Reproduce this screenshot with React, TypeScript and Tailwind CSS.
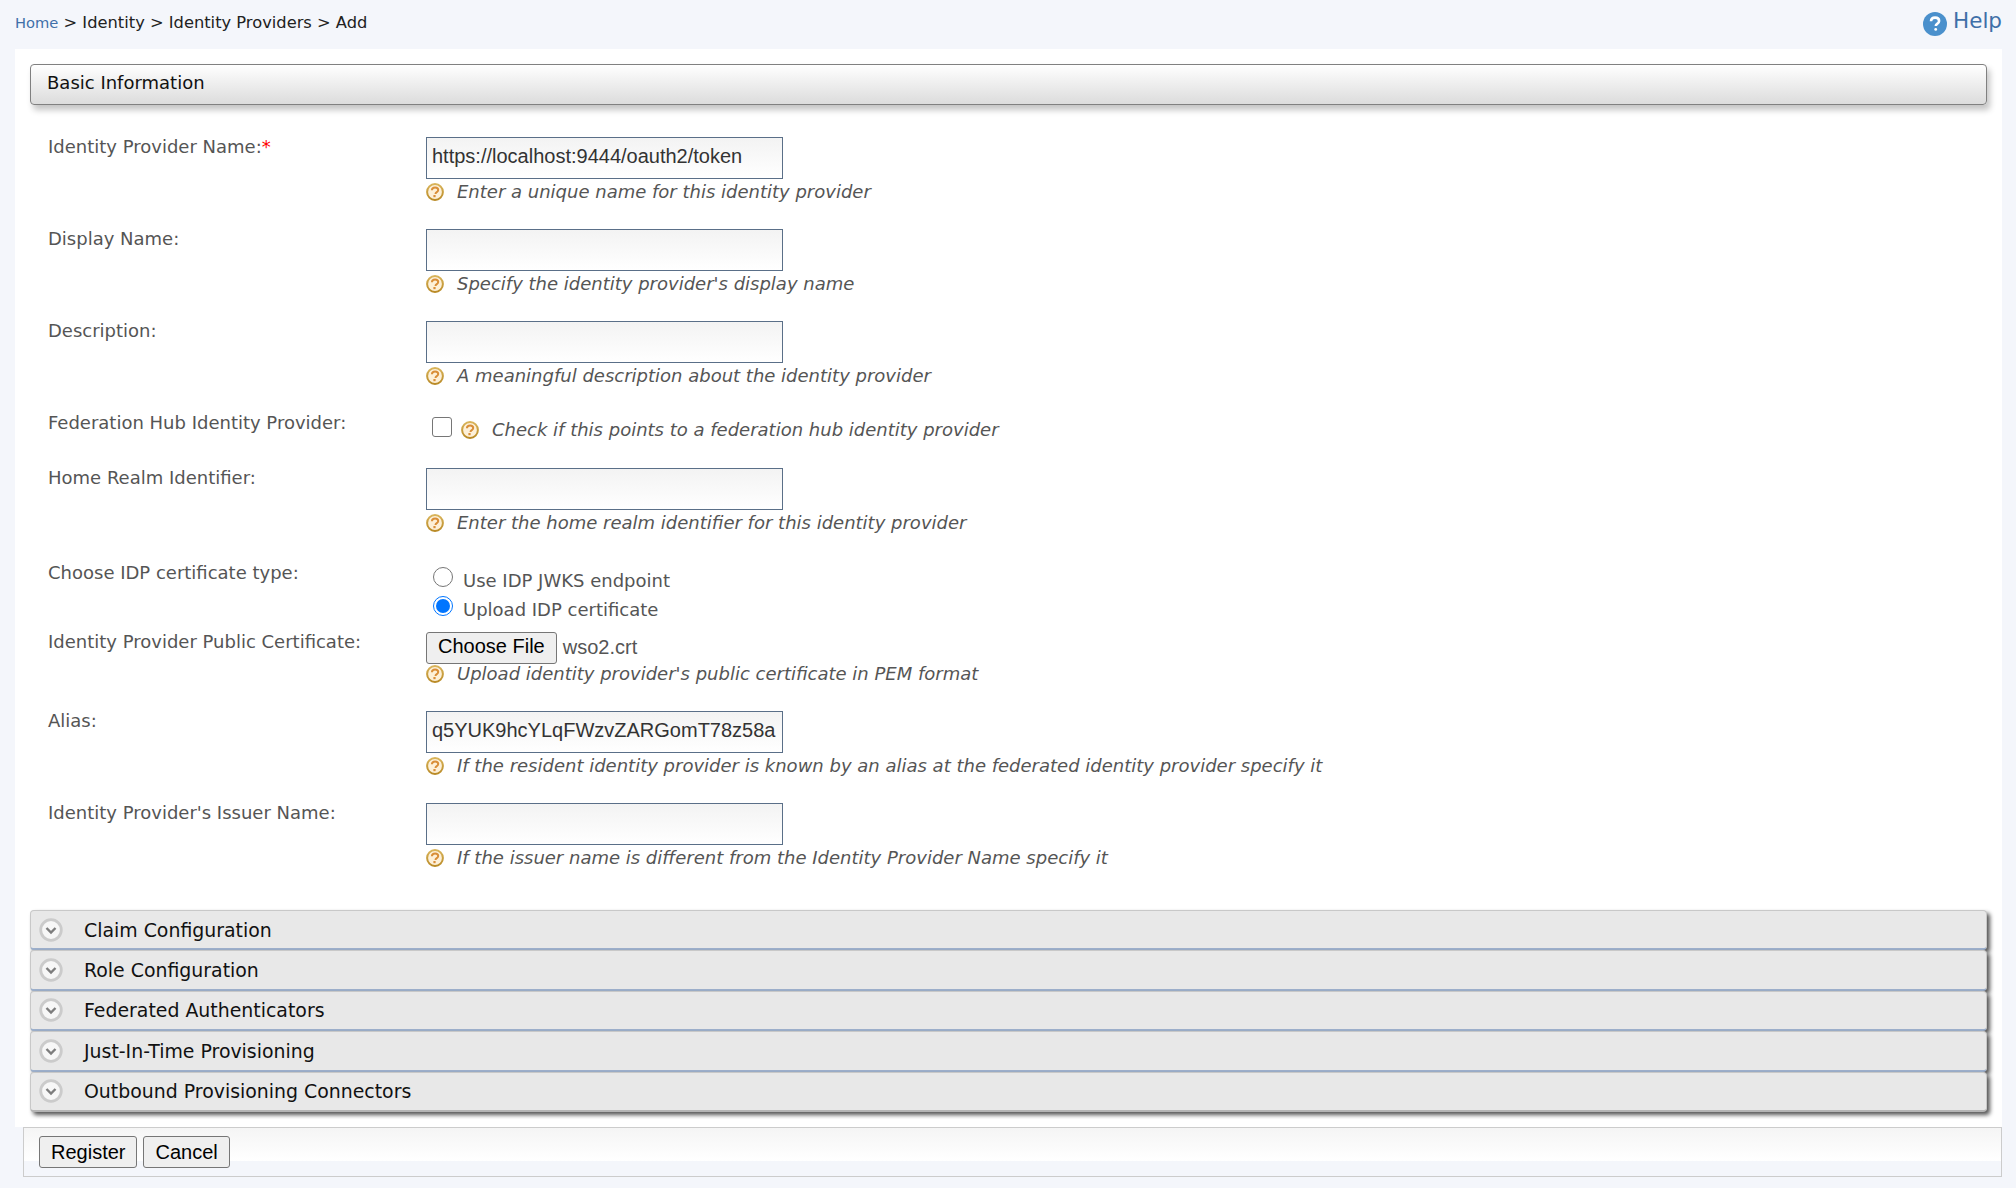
import React from "react";

const sans = "font-['DejaVu_Sans',sans-serif]";

function HintIcon() {
  return (
    <svg width="18" height="18" viewBox="0 0 18 18" className="shrink-0">
      <defs>
        <linearGradient id="ring" x1="0" y1="0" x2="0" y2="1">
          <stop offset="0%" stopColor="#d9b45a" />
          <stop offset="100%" stopColor="#b98a26" />
        </linearGradient>
      </defs>
      <circle cx="9" cy="9" r="7.900" fill="#fdf0d8" stroke="url(#ring)" strokeWidth="2" />
      <path d="M5.900 7.200c.1-1.900 1.400-2.800 3.200-2.800 1.900 0 3.100 1 3.100 2.500 0 1.200-.7 1.700-1.500 2.300-.8.500-1.200.9-1.200 1.800" fill="none" stroke="#d98e38" strokeWidth="2" />
      <rect x="7.400" y="12" width="2.200" height="2.200" fill="#d98e38" />
    </svg>
  );
}

function Hint({ text }: { text: string }) {
  return (
    <div className="flex items-center h-[22px]">
      <HintIcon />
      <span className="ml-[13px] italic text-[18px] leading-[22px] text-[#555555] whitespace-nowrap">{text}</span>
    </div>
  );
}

function Label({ children }: { children: React.ReactNode }) {
  return <div className="w-[396px] shrink-0 pl-[18px] text-[18px] leading-[20px] text-[#555555] whitespace-nowrap">{children}</div>;
}

function TextBox({ value }: { value?: string }) {
  return (
    <input
      readOnly
      value={value ?? ""}
      className="block w-[357px] h-[42px] px-[5px] pb-[4px] border border-[#5a6f88] bg-gradient-to-b from-[#f3f3f3] to-white font-['Liberation_Sans',sans-serif] text-[20px] text-[#333333] outline-none"
    />
  );
}

function InputRow({ label, value, hint, h = "h-[92px]" }: { label: React.ReactNode; value?: string; hint: string; h?: string }) {
  return (
    <div className={`flex ${h}`}>
      <Label>{label}</Label>
      <div>
        <TextBox value={value} />
        <div className="mt-[2px]"><Hint text={hint} /></div>
      </div>
    </div>
  );
}

function Chevron() {
  return (
    <svg width="24" height="24" viewBox="0 0 24 24" className="shrink-0">
      <circle cx="12" cy="12" r="10.300" fill="#f7f7f7" stroke="#cbcbcb" strokeWidth="2.800" />
      <path d="M7.500 10l4.500 4.600L16.500 10" fill="none" stroke="#7d7d7d" strokeWidth="2.400" />
    </svg>
  );
}

function Section({ title, last }: { title: string; last?: boolean }) {
  return (
    <div
      className={`flex items-center h-[40.4px] rounded-[4px] border border-[#c8c8c8] bg-[#e8e8e8] pl-[8px] shadow-[3px_3px_4px_#555555] border-b-2 ${last ? "border-b-[#b4b4b4]" : "border-b-[#9db0cc]"}`}
    >
      <Chevron />
      <span className="ml-[21px] text-[18.900px] leading-[24px] text-[#111111] whitespace-nowrap">{title}</span>
    </div>
  );
}

function Btn({ children }: { children: React.ReactNode }) {
  return (
    <button className="h-[32px] rounded-[3px] border border-[#767676] bg-[#efefef] px-[11px] font-['Liberation_Sans',sans-serif] text-[20px] leading-[24px] text-black">
      {children}
    </button>
  );
}

export default function App() {
  return (
    <div className={`${sans} w-[2016px] h-[1188px] overflow-hidden bg-[#f4f6fb]`}>
      <div className="flex justify-between h-[49px]">
        <div className="pl-[15px] pt-[13px] text-[16.300px] leading-[20px] text-[#222222] whitespace-nowrap">
          <span className="text-[14.700px] text-[#3f6fa8]">Home</span>
          <span> &gt; Identity &gt; Identity Providers &gt; Add</span>
        </div>
        <div className="flex items-start pr-[14px] pt-[9px]">
          <svg width="24" height="24" viewBox="0 0 24 24" className="mt-[3px]">
            <circle cx="12" cy="12" r="12" fill="#4a90cc" />
            <path d="M8 9.300c.1-2.400 1.800-3.700 4.100-3.700 2.400 0 4 1.300 4 3.300 0 1.500-.9 2.200-2 3-.9.600-1.300 1-1.300 2.100" fill="none" stroke="#ffffff" strokeWidth="2.600" />
            <rect x="11.300" y="16" width="2.800" height="2.800" rx="1.400" fill="#ffffff" />
          </svg>
          <span className="ml-[6px] -mt-[1px] text-[21.500px] leading-[26px] text-[#3f6fa8]">Help</span>
        </div>
      </div>

      <div className="ml-[15px] w-[1987px] h-[1078px] bg-white pt-[15px] px-[15px]">
        <div className="h-[41px] w-[1957px] flex items-center pb-[4px] pl-[16px] rounded-[4px] border border-[#808080] bg-gradient-to-b from-white to-[#dcdcdc] shadow-[3px_5px_6px_#c4c4c4] text-[18px] text-[#111111]">
          Basic Information
        </div>

        <div className="mt-[32px]">
          <InputRow label={<>Identity Provider Name:<span className="text-[#ff0000]">*</span></>} value="https://localhost:9444/oauth2/token" hint="Enter a unique name for this identity provider" />
          <InputRow label="Display Name:" hint="Specify the identity provider's display name" />
          <InputRow label="Description:" hint="A meaningful description about the identity provider" />

          <div className="flex h-[55px]">
            <Label>Federation Hub Identity Provider:</Label>
            <div className="flex items-start pl-[6px]">
              <input type="checkbox" readOnly className="mt-[4px] w-[20px] h-[20px] appearance-none rounded-[3px] border border-[#767676] bg-white" />
              <div className="ml-[9px] mt-[6px]"><Hint text="Check if this points to a federation hub identity provider" /></div>
            </div>
          </div>

          <InputRow label="Home Realm Identifier:" hint="Enter the home realm identifier for this identity provider" h="h-[95px]" />

          <div className="flex h-[69px]">
            <Label>Choose IDP certificate type:</Label>
            <div className="pl-[7px] text-[18px] text-[#555555]">
              <div className="flex items-center h-[30px] mt-[1px]">
                <span className="w-[20px] h-[20px] rounded-full border border-[#767676] bg-white -mt-[5px]" />
                <span className="ml-[10px] mt-[3px]">Use IDP JWKS endpoint</span>
              </div>
              <div className="flex items-center h-[30px]">
                <span className="flex items-center justify-center w-[20px] h-[20px] rounded-full border border-[#0075ff] bg-white -mt-[6px]">
                  <span className="w-[14px] h-[14px] rounded-full bg-[#0075ff]" />
                </span>
                <span className="ml-[10px] mt-[1px]">Upload IDP certificate</span>
              </div>
            </div>
          </div>

          <div className="flex h-[79px]">
            <Label>Identity Provider Public Certificate:</Label>
            <div>
              <div className="flex items-center h-[31px]">
                <div className="h-[32px] flex items-center pb-[3px] rounded-[3px] border border-[#767676] bg-[#efefef] px-[11px] font-['Liberation_Sans',sans-serif] text-[20px] text-black">Choose File</div>
                <span className="ml-[6px] -mt-[1px] font-['Liberation_Sans',sans-serif] text-[20px] text-[#555555]">wso2.crt</span>
              </div>
              <Hint text="Upload identity provider's public certificate in PEM format" />
            </div>
          </div>

          <InputRow label="Alias:" value="q5YUK9hcYLqFWzvZARGomT78z58a" hint="If the resident identity provider is known by an alias at the federated identity provider specify it" />
          <InputRow label="Identity Provider's Issuer Name:" hint="If the issuer name is different from the Identity Provider Name specify it" h="h-[107px]" />
        </div>

        <div className="w-[1957px]">
          <Section title="Claim Configuration" />
          <Section title="Role Configuration" />
          <Section title="Federated Authenticators" />
          <Section title="Just-In-Time Provisioning" />
          <Section title="Outbound Provisioning Connectors" last />
        </div>
      </div>

      <div className="ml-[23px] w-[1979px] h-[50px] border border-[#cccccc] bg-[linear-gradient(#f5f5f5,#ffffff_33px,#f4f6fb_33px)] pl-[15px] pt-[8px] flex items-start gap-[6px]">
        <Btn>Register</Btn>
        <Btn>Cancel</Btn>
      </div>
    </div>
  );
}
